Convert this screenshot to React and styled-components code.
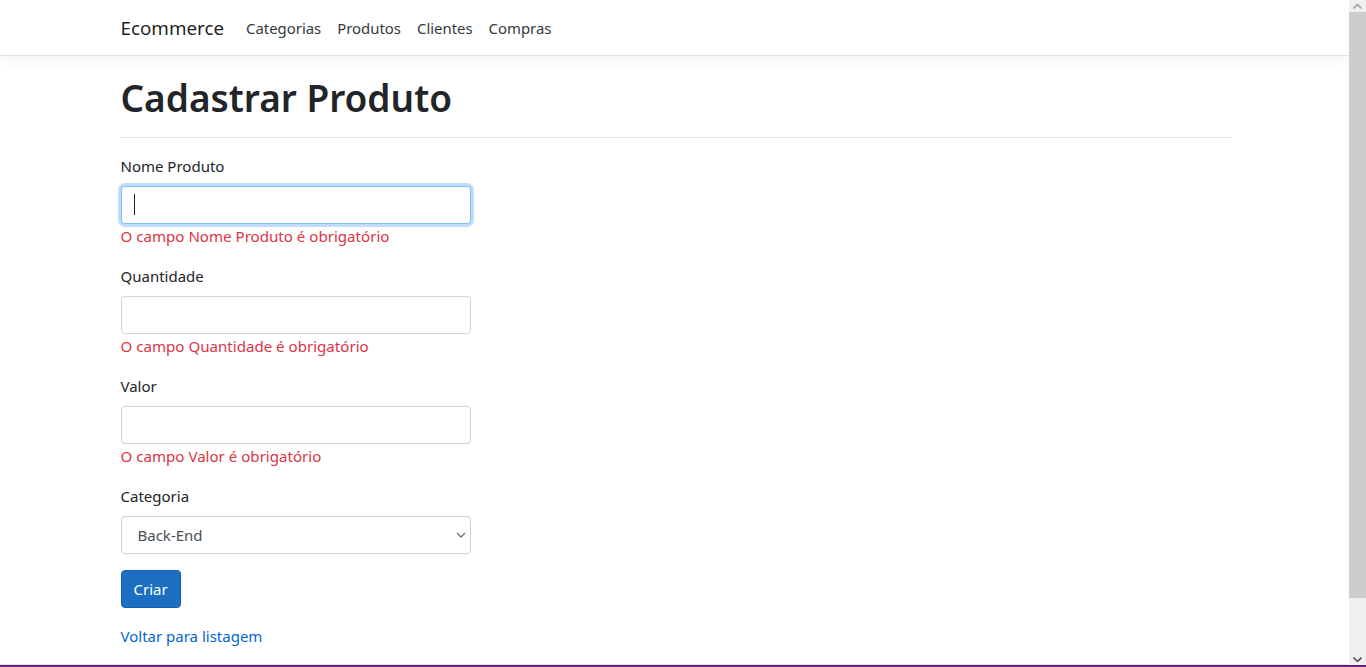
import React from 'react'
import styled, { createGlobalStyle } from 'styled-components'

const GlobalStyle = createGlobalStyle`
  html, body {
    margin: 0;
    padding: 0;
    background: #ffffff;
  }
  body {
    font-family: 'Noto Sans', 'Open Sans', Arial, sans-serif;
    color: #212529;
    overflow: hidden;
  }
  * {
    box-sizing: border-box;
  }
`

function App () {
  return (
    <>
      <GlobalStyle />
      <Window>
        <Screen>
          <Page>
            <NavBar>
              <NavInner>
                <Brand href='#'>Ecommerce</Brand>
                <NavList>
                  <NavLink href='#'>Categorias</NavLink>
                  <NavLink href='#'>Produtos</NavLink>
                  <NavLink href='#'>Clientes</NavLink>
                  <NavLink href='#'>Compras</NavLink>
                </NavList>
              </NavInner>
            </NavBar>
            <Container>
              <Title>Cadastrar Produto</Title>
              <Rule />
              <form onSubmit={e => e.preventDefault()}>
                <FormGroup>
                  <Label>Nome Produto</Label>
                  <FieldWrap>
                    <Input focused />
                    <Caret />
                  </FieldWrap>
                  <Error>O campo Nome Produto é obrigatório</Error>
                </FormGroup>
                <FormGroup>
                  <Label>Quantidade</Label>
                  <Input />
                  <Error>O campo Quantidade é obrigatório</Error>
                </FormGroup>
                <FormGroup>
                  <Label>Valor</Label>
                  <Input />
                  <Error>O campo Valor é obrigatório</Error>
                </FormGroup>
                <FormGroup>
                  <Label>Categoria</Label>
                  <FieldWrap>
                    <Select defaultValue='back'>
                      <option value='back'>Back-End</option>
                      <option value='front'>Front-End</option>
                    </Select>
                    <Chevron width='10' height='6' viewBox='0 0 10 6'>
                      <path d='M1 1l4 4 4-4' fill='none' stroke='#6c757d' strokeWidth='1.4' />
                    </Chevron>
                  </FieldWrap>
                </FormGroup>
                <FormGroup>
                  <Button type='submit'>Criar</Button>
                </FormGroup>
              </form>
              <div>
                <BackLink href='#'>Voltar para listagem</BackLink>
              </div>
            </Container>
          </Page>
          <Scrollbar>
            <ScrollArrow>
              <svg width='9' height='5' viewBox='0 0 9 5'>
                <path d='M0.5 4.5l4-4 4 4' fill='none' stroke='#a3a3a3' strokeWidth='1.6' />
              </svg>
            </ScrollArrow>
            <Thumb />
            <Track />
            <ScrollArrow>
              <svg width='9' height='5' viewBox='0 0 9 5'>
                <path d='M0.5 0.5l4 4 4-4' fill='none' stroke='#505050' strokeWidth='1.6' />
              </svg>
            </ScrollArrow>
          </Scrollbar>
        </Screen>
      </Window>
    </>
  )
}

export default App

const Window = styled.div`
  height: 667px;
  display: flex;
  flex-direction: column;
  border-bottom: 2px solid #68217a;
`

const Screen = styled.div`
  flex: 1;
  display: flex;
  min-height: 0;
`

const Page = styled.div`
  flex: 1;
  min-width: 0;
  overflow: hidden;
  border-bottom: 1px solid #e2e2e2;
`

const NavBar = styled.nav`
  height: 56px;
  background: #ffffff;
  border-bottom: 1px solid #dee2e6;
  box-shadow: 0 4px 12px rgba(0, 0, 0, 0.05);
  margin-bottom: 16px;
  position: relative;
`

const NavInner = styled.div`
  width: 1140px;
  margin: 0 auto;
  padding: 0 13px 0 16px;
  height: 100%;
  display: flex;
  align-items: center;
`

const Brand = styled.a`
  font-size: 18.8px;
  color: rgba(0, 0, 0, 0.9);
  text-decoration: none;
  margin-right: 14px;
  line-height: 30px;
`

const NavList = styled.div`
  display: flex;
  align-items: center;
`

const NavLink = styled.a`
  font-size: 14.9px;
  color: #343a40;
  text-decoration: none;
  padding: 8px;
  line-height: 24px;
`

const Container = styled.div`
  width: 1140px;
  margin: 0 auto;
  padding: 0 14px 0 16px;
`

const Title = styled.h1`
  margin: 0;
  padding-top: 2px;
  font-size: 37px;
  font-weight: 600;
  line-height: 48px;
  color: #212529;
`

const Rule = styled.hr`
  border: 0;
  border-top: 1px solid #e2e2e2;
  margin: 15px 0 16px;
`

const FormGroup = styled.div`
  margin-bottom: 16px;
`

const Label = styled.label`
  display: block;
  font-size: 15px;
  line-height: 24px;
  margin-bottom: 8px;
  color: #212529;
`

const FieldWrap = styled.div`
  position: relative;
  width: 350px;
`

const Input = styled.input`
  display: block;
  width: 350px;
  height: 38px;
  padding: 6px 12px;
  font-size: 15px;
  font-family: inherit;
  color: #495057;
  background: #ffffff;
  border: 1px solid ${p => (p.focused ? '#80bdff' : '#ced4da')};
  border-radius: 4px;
  outline: none;
  box-shadow: ${p => (p.focused ? '0 0 0 3px rgba(0, 123, 255, 0.25)' : 'none')};
`

const Caret = styled.span`
  position: absolute;
  left: 13px;
  top: 8px;
  width: 1px;
  height: 21px;
  background: #212529;
`

const Error = styled.span`
  display: block;
  font-size: 15.1px;
  line-height: 24px;
  color: #dc3545;
`

const Select = styled.select`
  display: block;
  width: 350px;
  height: 38px;
  padding: 6px 12px 6px 16px;
  font-size: 15px;
  font-family: inherit;
  color: #495057;
  background: #ffffff;
  border: 1px solid #ced4da;
  border-radius: 4px;
  appearance: none;
  outline: none;
`

const Chevron = styled.svg`
  position: absolute;
  right: 5px;
  top: 16px;
  pointer-events: none;
`

const Button = styled.button`
  height: 38px;
  padding: 6px 12px;
  font-size: 15px;
  font-family: inherit;
  color: #ffffff;
  background: #1b6ec2;
  border: 1px solid #1861ac;
  border-radius: 4px;
  cursor: pointer;
`

const BackLink = styled.a`
  font-size: 15px;
  line-height: 24px;
  color: #0366d6;
  text-decoration: none;
`

const Scrollbar = styled.div`
  width: 17px;
  display: flex;
  flex-direction: column;
  background: #f0f0f0;
`

const ScrollArrow = styled.div`
  height: 12px;
  display: flex;
  align-items: center;
  justify-content: center;
`

const Thumb = styled.div`
  height: 586px;
  background: #cdcdcd;
`

const Track = styled.div`
  flex: 1;
`
